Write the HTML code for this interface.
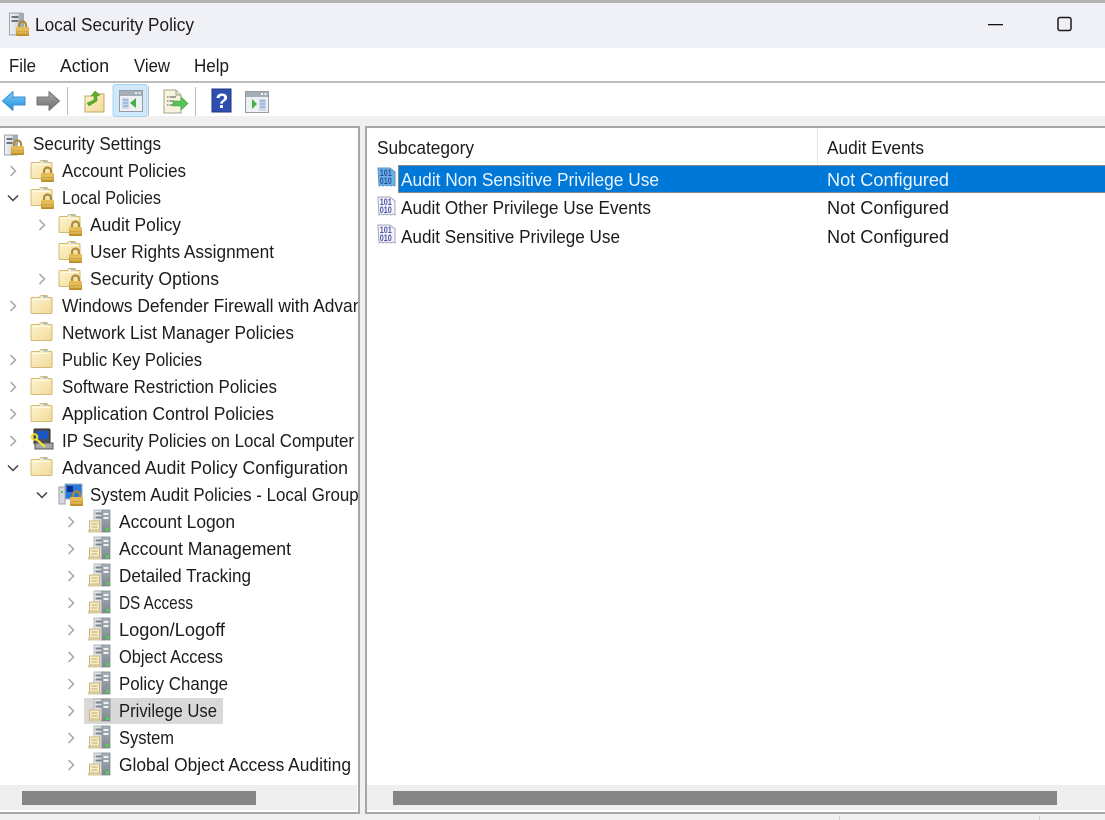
<!DOCTYPE html>
<html><head><meta charset="utf-8"><title>Local Security Policy</title>
<style>
html,body{margin:0;padding:0;background:#f0f0f0;width:1105px;height:820px;overflow:hidden}
svg{display:block;filter:blur(.3px)}
text{font-family:"Liberation Sans",sans-serif;font-size:18px;fill:#1c1c1c}
.w{fill:#eaf4ff}
</style></head><body>
<svg width="1105" height="820" viewBox="0 0 1105 820" xmlns="http://www.w3.org/2000/svg">
<defs>
<linearGradient id="fg" x1="0" y1="0" x2="1" y2="1"><stop offset="0" stop-color="#fff6d2"/><stop offset="1" stop-color="#f1d898"/></linearGradient>
<linearGradient id="lk" x1="0" y1="0" x2="0" y2="1"><stop offset="0" stop-color="#ecc25a"/><stop offset="1" stop-color="#b98a22"/></linearGradient>
<linearGradient id="tw" x1="0" y1="0" x2="1" y2="0"><stop offset="0" stop-color="#f0f2f4"/><stop offset="1" stop-color="#c6ccd2"/></linearGradient>
<linearGradient id="tw2" x1="0" y1="0" x2="0" y2="1"><stop offset="0" stop-color="#a9b1b8"/><stop offset="1" stop-color="#7f878e"/></linearGradient>
<linearGradient id="bk" x1="0" y1="0" x2="0" y2="1"><stop offset="0" stop-color="#7fcaf6"/><stop offset="1" stop-color="#1e8fe0"/></linearGradient>
<linearGradient id="gy" x1="0" y1="0" x2="0" y2="1"><stop offset="0" stop-color="#a8a8a8"/><stop offset="1" stop-color="#6e6e6e"/></linearGradient>
<clipPath id="cl"><rect x="0" y="128" width="358" height="660"/></clipPath>
<g id="lock"><path d="M3 6V4a3.500 3.500 0 0 1 7 0V6" fill="none" stroke="#a98a3a" stroke-width="2.200"/><rect x="0" y="6" width="13" height="9" rx="1" fill="url(#lk)"/><path d="M1 9h11M1 12h11" stroke="#f2d684" stroke-width=".8"/></g>
<g id="folder"><path d="M2 3.500h7l2-2h6l1 2h3a1 1 0 0 1 1 1v14a1 1 0 0 1-1 1H2a1 1 0 0 1-1-1v-14a1 1 0 0 1 1-1z" fill="url(#fg)" stroke="#d3b977" stroke-width="1"/><path d="M2.500 5.500h18" stroke="#fffbe8" stroke-width="1"/><rect x="13" y="2" width="4" height="1.500" fill="#8fc0e8"/></g>
<g id="flock"><use href="#folder"/><use href="#lock" x="11" y="8"/></g>
<g id="srv"><rect x="6" y="1" width="10" height="22" fill="url(#tw)" stroke="#a0a7ae" stroke-width=".8"/><rect x="14" y="1" width="8" height="22" fill="url(#tw2)" stroke="#868e95" stroke-width=".8"/><rect x="7.500" y="3.500" width="6" height="2" fill="#7b848d"/><rect x="7.500" y="7.500" width="6" height="2" fill="#7b848d"/><rect x="15.500" y="4" width="5" height="2" fill="#eef0f2"/><rect x="15.500" y="8" width="5" height="2" fill="#eef0f2"/><rect x="18" y="19" width="3" height="3" fill="#4fd04a"/><path d="M1.500 12h10v9h-10z" fill="#f7ecc8" stroke="#c9b47c"/><path d="M3.500 15h6M3.500 18h6" stroke="#c6ab66"/><path d="M0 21h13v2.500H0z" fill="#d8c99e"/></g>
<g id="sec"><rect x=".5" y="1" width="13" height="20" fill="url(#tw)" stroke="#8a929a" stroke-width=".8"/><rect x="9" y="1" width="5" height="20" fill="#a3abb3"/><rect x="2.500" y="4" width="6" height="2" fill="#6b747d"/><rect x="2.500" y="8" width="6" height="2" fill="#6b747d"/><use href="#lock" x="7" y="6"/></g>
<g id="bin"><path d="M1 1h12l5 4v14l-2-1-2 1-2-1-2 1-2-1-2 1-2-1-2 1z" fill="#f4f5fa" stroke="#a3a5b6" stroke-width="1"/><text x="2.800" y="9" style="font-size:9px;font-weight:bold;fill:#4d52a6" textLength="12" lengthAdjust="spacingAndGlyphs">101</text><text x="2.800" y="17" style="font-size:9px;font-weight:bold;fill:#4d52a6" textLength="12" lengthAdjust="spacingAndGlyphs">010</text></g>
<g id="binsel"><path d="M1 1h12l5 4v14l-2-1-2 1-2-1-2 1-2-1-2 1-2-1-2 1z" fill="#6fb0e6" stroke="#5c94c9" stroke-width="1"/><text x="2.800" y="9" style="font-size:9px;font-weight:bold;fill:#1f4f96" textLength="12" lengthAdjust="spacingAndGlyphs">101</text><text x="2.800" y="17" style="font-size:9px;font-weight:bold;fill:#1f4f96" textLength="12" lengthAdjust="spacingAndGlyphs">010</text></g>
<path id="cr" d="M-2.500 -5l5 5-5 5" fill="none" stroke="#a6a6a6" stroke-width="1.500"/>
<path id="cd" d="M-5 -2.500l5 5 5-5" fill="none" stroke="#404040" stroke-width="1.500"/>
<g id="win"><rect x=".5" y=".5" width="23" height="21" fill="#eef0f3" stroke="#959da5"/><rect x="1" y="1" width="22" height="5" fill="#a5adb5"/><rect x="16" y="2" width="2" height="2" fill="#eef"/><rect x="19.500" y="2" width="2" height="2" fill="#eef"/></g>
</defs>

<!-- chrome -->
<rect width="1105" height="820" fill="#f0f0f0"/>
<rect y="0" width="1105" height="3" fill="#b4b4b4"/>
<rect y="3" width="1105" height="45" fill="#eff1f7"/>
<rect y="48" width="1105" height="33" fill="#fff"/>
<rect y="81" width="1105" height="2" fill="#bdbdbd"/>
<rect y="83" width="1105" height="33" fill="#fff"/>
<rect y="116" width="1105" height="10" fill="#f0f0f0"/>

<!-- title -->
<g transform="translate(9,12)"><rect x=".5" y="1" width="13" height="22" fill="url(#tw)" stroke="#8a929a" stroke-width=".8"/><rect x="10" y="1" width="5" height="22" fill="#a3abb3"/><rect x="2.500" y="4" width="7" height="2" fill="#6b747d"/><rect x="2.500" y="8" width="7" height="2" fill="#6b747d"/><use href="#lock" transform="translate(7,9)"/></g>
<text x="35" y="31" textLength="159" lengthAdjust="spacingAndGlyphs">Local Security Policy</text>
<rect x="988" y="24" width="15" height="1.300" fill="#111"/>
<rect x="1058" y="17.500" width="13" height="13" rx="2" fill="none" stroke="#1a1a1a" stroke-width="1.500"/>

<!-- menu -->
<text x="9" y="72" textLength="27" lengthAdjust="spacingAndGlyphs">File</text>
<text x="60" y="72" textLength="49" lengthAdjust="spacingAndGlyphs">Action</text>
<text x="134" y="72" textLength="36" lengthAdjust="spacingAndGlyphs">View</text>
<text x="194" y="72" textLength="35" lengthAdjust="spacingAndGlyphs">Help</text>

<!-- toolbar -->
<path d="M2.500 101L13 91.500v5.500h12v8H13v5.500z" fill="url(#bk)" stroke="#3a8fd0" stroke-linejoin="round"/>
<path d="M59.500 101L49 91.500v5.500H37v8h12v5.500z" fill="url(#gy)" stroke="#777" stroke-linejoin="round"/>
<rect x="67" y="87" width="1" height="28" fill="#bfbfbf"/>
<g transform="translate(84,91)"><path d="M1 5h7l2-2h10v18H1z" fill="url(#fg)" stroke="#c5a760"/><path d="M3 12L10 9V5L7 5l4-5 5 4-3 1v5l-8 5z" fill="#5fb02f" stroke="#3f8a1e" stroke-width=".5"/></g>
<rect x="113" y="84.500" width="34" height="32" rx="2" fill="#cfe8fb" stroke="#a4d4f5"/>
<use href="#win" x="119" y="90"/>
<rect x="122" y="98" width="7" height="11" fill="#cfd8e8"/><path d="M123 100h5M123 103h5M123 106h5" stroke="#6d9bd0"/>
<path d="M136 98v10l-6-5z" fill="#46b046"/>
<rect x="148" y="86" width="1" height="30" fill="#bfbfbf"/>
<g transform="translate(163,89)"><path d="M1 1h12l5 5v18H1z" fill="#f8f3dc" stroke="#a5a08a"/><path d="M13 1v5h5" fill="#e8e4d0" stroke="#a5a08a"/><path d="M4 8h9M4 12h7M4 16h7" stroke="#555" stroke-width="1" stroke-dasharray="1.500 1 7 0"/><path d="M10 12h8V8l7 6.500-7 6.500v-4h-8z" fill="#55c455" stroke="#3f9a3f" stroke-width=".6"/></g>
<rect x="195" y="87" width="1" height="29" fill="#bfbfbf"/>
<rect x="212" y="89" width="19" height="23" fill="#2e4fb0" stroke="#1d357f"/>
<text x="215.500" y="108" style="font-size:21px;font-weight:bold;fill:#fff">?</text>
<use href="#win" x="245" y="91"/>
<rect x="259" y="99" width="7" height="12" fill="#cfd8e8"/><path d="M260 101h5M260 104h5M260 107h5" stroke="#6d9bd0"/>
<path d="M252 99v10l5-5z" fill="#46b046"/>

<!-- left panel -->
<rect x="0" y="126" width="360" height="688" fill="#a4a6aa"/>
<rect x="0" y="128" width="358" height="684" fill="#fff"/>
<!-- right panel -->
<rect x="365" y="126" width="740" height="688" fill="#a4a6aa"/>
<rect x="367" y="128" width="738" height="684" fill="#fff"/>

<!-- tree icons -->
<use href="#sec" x="4" y="134"/>
<use href="#cr" x="13" y="171"/><use href="#flock" x="30" y="159"/>
<use href="#cd" x="13" y="198"/><use href="#flock" x="30" y="186"/>
<use href="#cr" x="42" y="225"/><use href="#flock" x="58" y="213"/>
<use href="#flock" x="58" y="240"/>
<use href="#cr" x="42" y="279"/><use href="#flock" x="58" y="267"/>
<use href="#cr" x="13" y="306"/><use href="#folder" x="30" y="294"/>
<use href="#folder" x="30" y="321"/>
<use href="#cr" x="13" y="360"/><use href="#folder" x="30" y="348"/>
<use href="#cr" x="13" y="387"/><use href="#folder" x="30" y="375"/>
<use href="#cr" x="13" y="414"/><use href="#folder" x="30" y="402"/>
<use href="#cr" x="13" y="441"/>
<g transform="translate(31,428)"><rect x="3" y="1" width="16" height="15" rx="1" fill="#4a4f55" stroke="#2a2a2a"/><rect x="6" y="3" width="11" height="8" fill="#1c56c4"/><rect x="4" y="15" width="18" height="6" fill="#a5a9ad" stroke="#555"/><circle cx="3.500" cy="9" r="2.800" fill="none" stroke="#f2e230" stroke-width="2"/><path d="M5 11l9 8" stroke="#f2e230" stroke-width="2.200"/></g>
<use href="#cd" x="13" y="468"/><use href="#folder" x="30" y="456"/>
<use href="#cd" x="42" y="495"/>
<g transform="translate(59,483)"><rect x="0" y="4" width="6" height="17" fill="#d5d9dd" stroke="#9aa0a6"/><rect x="2" y="8" width="2" height="2" fill="#4fc34a"/><rect x="6" y="1" width="17" height="15" fill="#2a78d8" stroke="#aab1b8"/><rect x="8" y="3" width="6" height="6" fill="#0d2e8c"/><use href="#lock" transform="translate(11,8)"/></g>

<rect x="84" y="698" width="139" height="26" fill="#d9d9d9"/>
<use href="#cr" x="71" y="522"/><use href="#srv" x="88" y="509"/>
<use href="#cr" x="71" y="549"/><use href="#srv" x="88" y="536"/>
<use href="#cr" x="71" y="576"/><use href="#srv" x="88" y="563"/>
<use href="#cr" x="71" y="603"/><use href="#srv" x="88" y="590"/>
<use href="#cr" x="71" y="630"/><use href="#srv" x="88" y="617"/>
<use href="#cr" x="71" y="657"/><use href="#srv" x="88" y="644"/>
<use href="#cr" x="71" y="684"/><use href="#srv" x="88" y="671"/>
<use href="#cr" x="71" y="711"/><use href="#srv" x="88" y="698"/>
<use href="#cr" x="71" y="738"/><use href="#srv" x="88" y="725"/>
<use href="#cr" x="71" y="765"/><use href="#srv" x="88" y="752"/>

<!-- tree text -->
<g clip-path="url(#cl)">
<text x="33" y="150" textLength="128" lengthAdjust="spacingAndGlyphs">Security Settings</text>
<text x="62" y="177" textLength="124" lengthAdjust="spacingAndGlyphs">Account Policies</text>
<text x="62" y="204" textLength="99" lengthAdjust="spacingAndGlyphs">Local Policies</text>
<text x="90" y="231" textLength="91" lengthAdjust="spacingAndGlyphs">Audit Policy</text>
<text x="90" y="258" textLength="184" lengthAdjust="spacingAndGlyphs">User Rights Assignment</text>
<text x="90" y="285" textLength="129" lengthAdjust="spacingAndGlyphs">Security Options</text>
<text x="62" y="312" textLength="396" lengthAdjust="spacingAndGlyphs">Windows Defender Firewall with Advanced Security</text>
<text x="62" y="339" textLength="232" lengthAdjust="spacingAndGlyphs">Network List Manager Policies</text>
<text x="62" y="366" textLength="140" lengthAdjust="spacingAndGlyphs">Public Key Policies</text>
<text x="62" y="393" textLength="215" lengthAdjust="spacingAndGlyphs">Software Restriction Policies</text>
<text x="62" y="420" textLength="212" lengthAdjust="spacingAndGlyphs">Application Control Policies</text>
<text x="62" y="447" textLength="292" lengthAdjust="spacingAndGlyphs">IP Security Policies on Local Computer</text>
<text x="62" y="474" textLength="286" lengthAdjust="spacingAndGlyphs">Advanced Audit Policy Configuration</text>
<text x="90" y="501" textLength="372" lengthAdjust="spacingAndGlyphs">System Audit Policies - Local Group Policy Object</text>
<text x="119" y="528" textLength="116" lengthAdjust="spacingAndGlyphs">Account Logon</text>
<text x="119" y="555" textLength="172" lengthAdjust="spacingAndGlyphs">Account Management</text>
<text x="119" y="582" textLength="132" lengthAdjust="spacingAndGlyphs">Detailed Tracking</text>
<text x="119" y="609" textLength="74" lengthAdjust="spacingAndGlyphs">DS Access</text>
<text x="119" y="636" textLength="106" lengthAdjust="spacingAndGlyphs">Logon/Logoff</text>
<text x="119" y="663" textLength="104" lengthAdjust="spacingAndGlyphs">Object Access</text>
<text x="119" y="690" textLength="109" lengthAdjust="spacingAndGlyphs">Policy Change</text>
<text x="119" y="717" textLength="98" lengthAdjust="spacingAndGlyphs">Privilege Use</text>
<text x="119" y="744" textLength="55" lengthAdjust="spacingAndGlyphs">System</text>
<text x="119" y="771" textLength="232" lengthAdjust="spacingAndGlyphs">Global Object Access Auditing</text>
</g>

<!-- scrollbars -->
<rect x="0" y="785" width="357" height="25" fill="#efefef"/>
<rect x="22" y="791" width="234" height="14" fill="#858585"/>
<rect x="367" y="785" width="738" height="25" fill="#efefef"/>
<rect x="393" y="791" width="664" height="14" fill="#858585"/>

<!-- list -->
<rect x="817" y="128" width="1" height="37" fill="#e5e5e5"/>
<text x="377" y="154" textLength="97" lengthAdjust="spacingAndGlyphs">Subcategory</text>
<text x="827" y="154" textLength="97" lengthAdjust="spacingAndGlyphs">Audit Events</text>
<rect x="398" y="165" width="707" height="28" fill="#8a8a8a"/>
<rect x="399" y="166" width="706" height="26" fill="#0078d7"/>
<use href="#binsel" x="377" y="167"/>
<use href="#bin" x="377" y="196"/>
<use href="#bin" x="377" y="224"/>
<text class="w" x="401" y="186" textLength="258" lengthAdjust="spacingAndGlyphs">Audit Non Sensitive Privilege Use</text>
<text class="w" x="827" y="186" textLength="122" lengthAdjust="spacingAndGlyphs">Not Configured</text>
<text x="401" y="214" textLength="250" lengthAdjust="spacingAndGlyphs">Audit Other Privilege Use Events</text>
<text x="827" y="214" textLength="122" lengthAdjust="spacingAndGlyphs">Not Configured</text>
<text x="401" y="243" textLength="219" lengthAdjust="spacingAndGlyphs">Audit Sensitive Privilege Use</text>
<text x="827" y="243" textLength="122" lengthAdjust="spacingAndGlyphs">Not Configured</text>

<!-- status -->
<rect x="839" y="816" width="1" height="4" fill="#d0d0d0"/>
<rect x="1039" y="816" width="1" height="4" fill="#d0d0d0"/>
</svg>
</body></html>
